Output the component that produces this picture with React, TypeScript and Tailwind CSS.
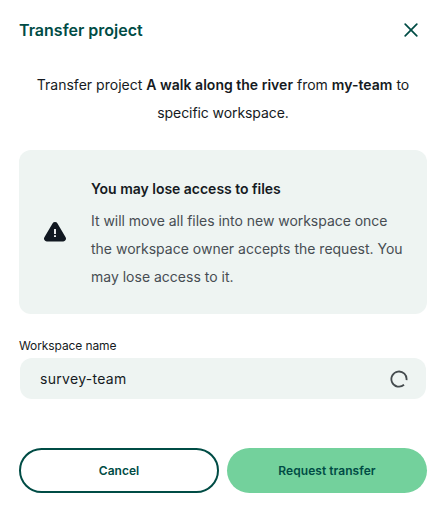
import React from 'react';

export default function App() {
  return (
    <div className="flex h-[505px] w-[442px] flex-col bg-white pl-[19px] pr-[15px] font-['Inter',sans-serif] text-[#151a22]">
      <header className="flex h-[60px] items-center justify-between text-[#004c45]">
        <h1 className="text-[16px] font-semibold leading-6">Transfer project</h1>
        <button aria-label="Close" className="flex size-8 items-center justify-center">
          <svg width="14" height="14" viewBox="0 0 14 14" fill="none" stroke="currentColor" strokeWidth="1.7" strokeLinecap="round">
            <path d="M1.2 1.2l11.6 11.6M12.8 1.2L1.2 12.8" />
          </svg>
        </button>
      </header>
      <p className="mt-[11px] text-center text-[14px] leading-7">
        <span className="tracking-[0.02px]">Transfer project <b className="font-semibold">A walk along the river</b> from <b className="font-semibold">my-team</b> to</span>
        <br /><span className="tracking-[-0.08px]">specific workspace.</span>
      </p>
      <section className="mt-[23px] flex h-[164px] items-center rounded-xl bg-[#eef4f2] pl-6">
        <svg width="24" height="24" viewBox="0 0 24 24" className="mr-6 shrink-0">
          <path d="M9.5 3.5a2.9 2.9 0 0 1 5 0l8.1 13.7a2.8 2.8 0 0 1-2.4 4.2H3.8a2.8 2.8 0 0 1-2.4-4.2z" fill="#111821" />
          <path d="M12 9v5M12 15.3v1.8" stroke="white" strokeWidth="1.8" />
        </svg>
        <div className="pt-0.5">
          <h2 className="text-[14px] font-semibold leading-7 tracking-[-0.02px]">You may lose access to files</h2>
          <p className="mt-1 text-[14px] leading-7 text-[#474d52]"><span className="tracking-[-0.03px]">It will move all files into new workspace once</span><br />the workspace owner accepts the request. You<br />may lose access to it.</p>
        </div>
      </section>
      <label className="mt-6 text-[12px] leading-4 tracking-[-0.1px]">Workspace name</label>
      <div className="mx-px mt-1 flex h-[41px] items-center justify-between rounded-xl bg-[#eef4f2] pl-5 pr-[18px]">
        <span className="text-[14px] tracking-[0.3px]">survey-team</span>
        <svg width="18" height="18" viewBox="0 0 18 18" fill="none" stroke="#444b4e" strokeWidth="1.8"><path d="M14 14.8A7.6 7.6 0 1 1 16.5 10.2" /></svg>
      </div>
      <footer className="mt-[49px] grid grid-cols-2 gap-2 text-[12px] font-semibold text-[#004c45]">
        <button className="h-[45px] rounded-full border-2 border-current">Cancel</button>
        <button className="h-[45px] rounded-full bg-[#73d19c] tracking-[0.05px]">Request transfer</button>
      </footer>
    </div>
  );
}
